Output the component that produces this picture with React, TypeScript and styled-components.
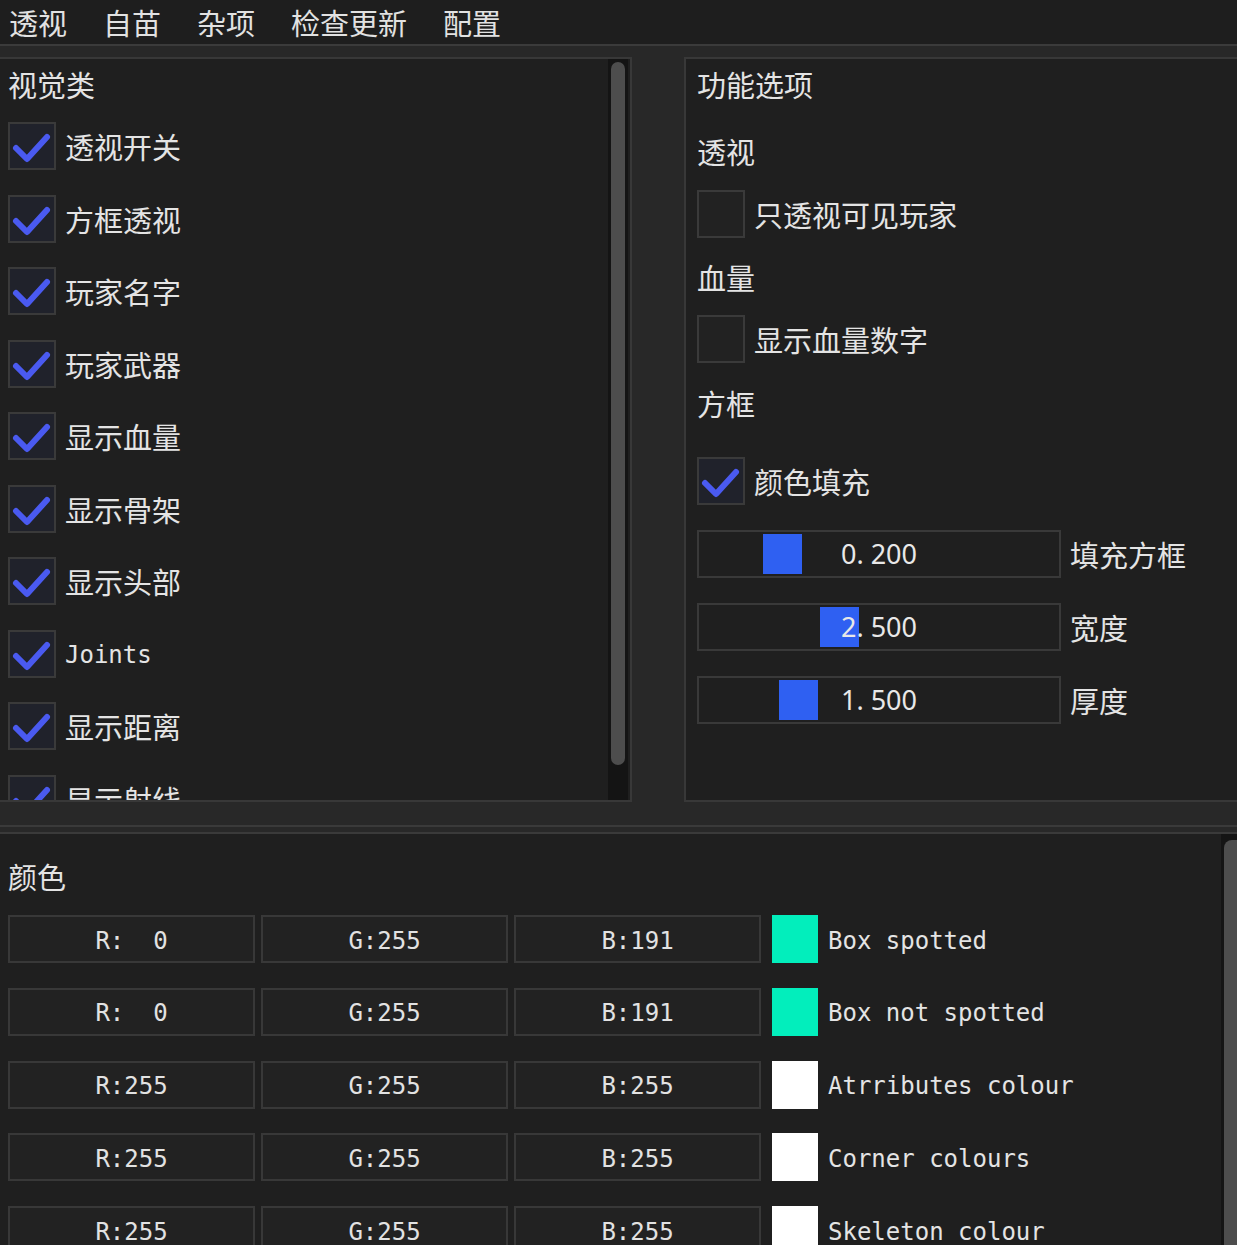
import React from "react";
import styled, { createGlobalStyle } from "styled-components";

const CJK = `"Noto Sans CJK SC", "Noto Sans", sans-serif`;
const MONO = `"DejaVu Sans Mono", "Liberation Mono", "Noto Sans CJK SC", monospace`;
const SANS = `"Noto Sans", "Noto Sans CJK SC", sans-serif`;

const GlobalStyle = createGlobalStyle`
  html, body { margin: 0; padding: 0; background: #282828; overflow: hidden; }
  body { font-family: ${CJK}; }
  * { box-sizing: border-box; }
`;

const Root = styled.div`
  width: 1237px;
  height: 1245px;
  overflow: hidden;
  background: #282828;
  display: flex;
  flex-direction: column;
  color: #e4e4e4;
  font-family: ${CJK};
`;

const MenuBar = styled.nav`
  flex: none;
  height: 46px;
  background: #1e1e1e;
  border-bottom: 2px solid #3b3b3b;
  display: flex;
  align-items: center;
  gap: 36px;
  padding-left: 9px;
  font-size: 29px;
  line-height: 44px;
`;

const MenuItem = styled.span`
  color: #e2e2e2;
`;

const TopArea = styled.div`
  flex: none;
  height: 745px;
  margin-top: 11px;
  display: flex;
  gap: 52px;
`;

const LeftChild = styled.section`
  flex: none;
  width: 632px;
  height: 100%;
  background: #1f1f1f;
  border-top: 2px solid #383838;
  border-bottom: 2px solid #383838;
  border-right: 2px solid #383838;
  padding-right: 2px;
  display: flex;
  overflow: hidden;
`;

const RightChild = styled.section`
  flex: 1;
  height: 100%;
  background: #1f1f1f;
  border-top: 2px solid #383838;
  border-bottom: 2px solid #383838;
  border-left: 2px solid #383838;
  overflow: hidden;
`;

const LeftContent = styled.div`
  flex: 1;
  padding: 9px 0 0 8px;
  overflow: hidden;
`;

const ScrollTrack = styled.div<{ $pad: string }>`
  flex: none;
  width: 20px;
  height: 100%;
  background: #141414;
  padding: ${(p) => p.$pad};
  display: flex;
  flex-direction: column;
`;

const ScrollThumb = styled.div`
  flex: none;
  width: 100%;
  background: #4d4d4d;
  border-radius: 8px;
`;

const Title = styled.div<{ $mt?: number }>`
  font-size: 29px;
  line-height: 32px;
  height: 32px;
  white-space: nowrap;
  margin-top: ${(p) => p.$mt ?? 0}px;
`;

const CheckList = styled.div`
  display: flex;
  flex-direction: column;
  gap: 24.5px;
  margin-top: 22px;
`;

const CheckRow = styled.div<{ $mt?: number }>`
  display: flex;
  align-items: center;
  gap: 9px;
  height: 48px;
  flex: none;
  margin-top: ${(p) => p.$mt ?? 0}px;
`;

const CheckBox = styled.div<{ $checked: boolean }>`
  flex: none;
  width: 48px;
  height: 48px;
  border: 2px solid #3a3a3a;
  background: ${(p) => (p.$checked ? "#20222b" : "#222222")};
  display: flex;
  align-items: center;
  justify-content: center;
`;

const Label = styled.span<{ $latin?: boolean }>`
  white-space: pre;
  font-family: ${(p) => (p.$latin ? MONO : CJK)};
  font-size: ${(p) => (p.$latin ? "24px" : "29px")};
  line-height: 32px;
  color: #e4e4e4;
  padding-top: ${(p) => (p.$latin ? "3px" : "0")};
`;

const RightContent = styled.div`
  display: flex;
  flex-direction: column;
  gap: 24px;
  padding: 9px 11px 0 11px;
`;

const SliderRow = styled.div`
  display: flex;
  align-items: center;
  gap: 9px;
  height: 48px;
  flex: none;
  margin-top: 1px;
`;

const SliderFrame = styled.div`
  position: relative;
  width: 364px;
  height: 48px;
  border: 2px solid #393939;
  background: #1f1f1f;
  display: flex;
  align-items: center;
  justify-content: center;
`;

const SliderGrab = styled.div`
  position: absolute;
  top: 2px;
  width: 39px;
  height: 40px;
  background: #2f60f2;
`;

const SliderValue = styled.span`
  position: relative;
  font-family: ${SANS};
  font-size: 27px;
  line-height: 32px;
  color: #e8e8e8;
  white-space: pre;
`;

const Separator = styled.div`
  flex: none;
  height: 2px;
  margin-top: 23px;
  background: #3a3a3a;
`;

const BottomChild = styled.section`
  flex: 1;
  margin-top: 5px;
  background: #1f1f1f;
  border-top: 2px solid #3a3a3a;
  display: flex;
  overflow: hidden;
`;

const BottomContent = styled.div`
  flex: 1;
  padding: 26px 0 0 8px;
`;

const ColorList = styled.div`
  display: flex;
  flex-direction: column;
  gap: 24.75px;
  margin-top: 23px;
`;

const ColorRow = styled.div`
  display: flex;
  align-items: center;
  height: 48px;
  flex: none;
`;

const ChannelGroup = styled.div`
  display: flex;
  gap: 6px;
`;

const ChannelBox = styled.div`
  width: 247px;
  height: 48px;
  border: 2px solid #383838;
  background: #222222;
  display: flex;
  align-items: center;
  justify-content: center;
  padding-top: 3px;
  font-family: ${MONO};
  font-size: 24px;
  white-space: pre;
  color: #e2e2e2;
`;

const Swatch = styled.div<{ $color: string }>`
  flex: none;
  width: 46px;
  height: 48px;
  margin-left: 11px;
  background: ${(p) => p.$color};
`;

const SwatchLabel = styled.span`
  margin-left: 10px;
  padding-top: 3px;
  font-family: ${MONO};
  font-size: 24px;
  white-space: pre;
  color: #e4e4e4;
`;

const BottomScroll = styled.div`
  flex: none;
  width: 16px;
  background: #141414;
  padding: 6px 0 0 3px;
  display: flex;
  flex-direction: column;
`;

const BottomThumb = styled.div`
  flex: 1;
  background: #4d4d4d;
  border-radius: 8px 0 0 0;
`;

const CheckMark = () => (
  <svg width="44" height="44" viewBox="0 0 44 44">
    <polyline
      points="6,24 17,35 37,13"
      fill="none"
      stroke="#4a5af0"
      strokeWidth="6"
      strokeLinecap="round"
      strokeLinejoin="round"
    />
  </svg>
);

const isLatin = (s: string) => /^[\x00-\x7f]+$/.test(s);

const Check = ({ label, checked, mt }: { label: string; checked: boolean; mt?: number }) => (
  <CheckRow $mt={mt}>
    <CheckBox $checked={checked}>{checked && <CheckMark />}</CheckBox>
    <Label $latin={isLatin(label)}>{label}</Label>
  </CheckRow>
);

const Slider = ({ value, label, grab }: { value: string; label: string; grab: number }) => (
  <SliderRow>
    <SliderFrame>
      <SliderGrab style={{ left: `${grab}px` }} />
      <SliderValue>{value}</SliderValue>
    </SliderFrame>
    <Label>{label}</Label>
  </SliderRow>
);

const menu = ["透视", "自苗", "杂项", "检查更新", "配置"];

const leftItems = [
  "透视开关",
  "方框透视",
  "玩家名字",
  "玩家武器",
  "显示血量",
  "显示骨架",
  "显示头部",
  "Joints",
  "显示距离",
  "显示射线",
];

const colorRows = [
  { r: "R:  0", g: "G:255", b: "B:191", color: "#02eebc", name: "Box spotted" },
  { r: "R:  0", g: "G:255", b: "B:191", color: "#02eebc", name: "Box not spotted" },
  { r: "R:255", g: "G:255", b: "B:255", color: "#ffffff", name: "Atrributes colour" },
  { r: "R:255", g: "G:255", b: "B:255", color: "#ffffff", name: "Corner colours" },
  { r: "R:255", g: "G:255", b: "B:255", color: "#ffffff", name: "Skeleton colour" },
];

export default function App() {
  return (
    <Root>
      <GlobalStyle />
      <MenuBar>
        {menu.map((m) => (
          <MenuItem key={m}>{m}</MenuItem>
        ))}
      </MenuBar>

      <TopArea>
        <LeftChild>
          <LeftContent>
            <Title>视觉类</Title>
            <CheckList>
              {leftItems.map((l) => (
                <Check key={l} label={l} checked />
              ))}
            </CheckList>
          </LeftContent>
          <ScrollTrack $pad="3px 3px 35px 3px">
            <ScrollThumb style={{ height: "703px" }} />
          </ScrollTrack>
        </LeftChild>

        <RightChild>
          <RightContent>
            <Title>功能选项</Title>
            <Title $mt={11}>透视</Title>
            <Check label="只透视可见玩家" checked={false} mt={-1} />
            <Title $mt={-1}>血量</Title>
            <Check label="显示血量数字" checked={false} mt={-2} />
            <Title>方框</Title>
            <Check label="颜色填充" checked mt={14} />
            <Slider value="0. 200" label="填充方框" grab={64} />
            <Slider value="2. 500" label="宽度" grab={121} />
            <Slider value="1. 500" label="厚度" grab={80} />
          </RightContent>
        </RightChild>
      </TopArea>

      <Separator />

      <BottomChild>
        <BottomContent>
          <Title>颜色</Title>
          <ColorList>
            {colorRows.map((row, i) => (
              <ColorRow key={i}>
                <ChannelGroup>
                  <ChannelBox>{row.r}</ChannelBox>
                  <ChannelBox>{row.g}</ChannelBox>
                  <ChannelBox>{row.b}</ChannelBox>
                </ChannelGroup>
                <Swatch $color={row.color} />
                <SwatchLabel>{row.name}</SwatchLabel>
              </ColorRow>
            ))}
          </ColorList>
        </BottomContent>
        <BottomScroll>
          <BottomThumb />
        </BottomScroll>
      </BottomChild>
    </Root>
  );
}
